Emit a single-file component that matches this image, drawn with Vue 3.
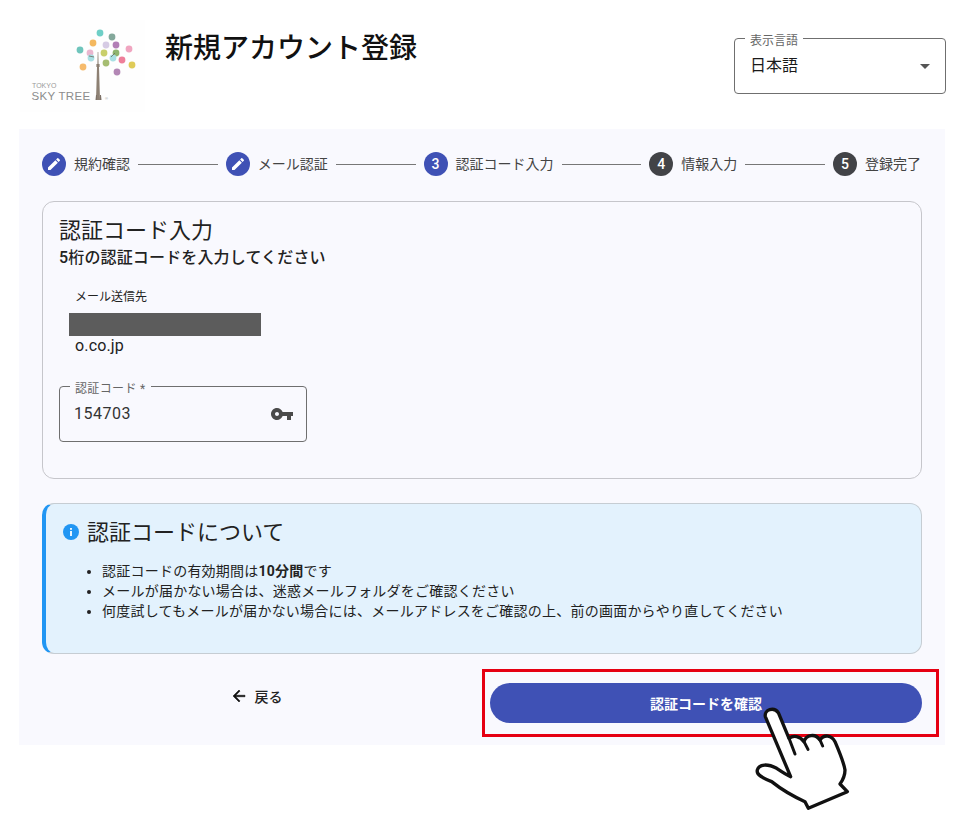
<script setup>
const steps = [
  { label: '規約確認', state: 'done' },
  { label: 'メール認証', state: 'done' },
  { label: '認証コード入力', state: 'active', n: 3 },
  { label: '情報入力', state: 'todo', n: 4 },
  { label: '登録完了', state: 'todo', n: 5 },
]
const dots = [
  [100, 33, '#6fcfc7'], [112, 37, '#84a89b'], [93, 43, '#f4b85f'], [106, 45, '#d6cbe4'], [116, 45, '#b27fb6'],
  [80, 50, '#6fc5bc'], [90, 53, '#e9b6cf'], [104, 53, '#c9cf6b'], [116, 53, '#8fb56f'], [129, 49, '#f0a5c0'],
  [91, 58, '#a9e0e4'], [113, 58, '#a9e0e4'], [122, 60, '#ee7f9a'], [106, 63, '#a6bd72'], [132, 65, '#dfcb58'],
  [83, 67, '#f6bb6c'], [117, 72, '#b387b5'],
]
</script>

<template>
  <div class="page">
    <header class="head">
      <svg class="logo" width="125" height="92" viewBox="20 20 125 92">
        <rect x="20" y="20" width="125" height="92" fill="#fefefe" />
        <circle v-for="(d, i) in dots" :key="i" :cx="d[0]" :cy="d[1]" r="3.4" :fill="d[2]" />
        <path d="M89 56 L94 57 M111 57 L115 53" stroke="#6b6b5f" stroke-width=".8" fill="none" />
        <path d="M97.7 52 L98.3 52 L98.6 64 L99.6 64 L99.6 67 L99 67 L100 100 L96 100 L97 67 L96.4 67 L96.4 64 L97.4 64 Z" fill="#8d8073" />
        <path d="M95.5 100 L96 95 L97 95 L97 100 Z M100 100 L100 95 L101 95 L101.5 100 Z" fill="#7d7167" />
        <text x="32" y="88" class="tokyo">TOKYO</text>
        <text x="31.5" y="100" class="sky">SKY TREE</text>
        <text x="105" y="100" class="reg">®</text>
      </svg>
      <h1 class="title">新規アカウント登録</h1>
      <div class="lang">
        <span class="float">表示言語</span>
        <span class="lang-value">日本語</span>
        <span class="caret"></span>
      </div>
    </header>

    <main class="panel">
      <div class="stepper">
        <template v-for="(s, i) in steps" :key="s.label">
          <div class="step">
            <span class="badge" :class="s.state">
              <svg v-if="s.state === 'done'" width="16" height="16" viewBox="0 0 24 24">
                <path fill="#fff" d="M3 17.25V21h3.75L17.81 9.94l-3.75-3.75L3 17.25zM20.71 7.04a1 1 0 0 0 0-1.41l-2.34-2.34a1 1 0 0 0-1.41 0l-1.83 1.83 3.75 3.75 1.83-1.83z" />
              </svg>
              <template v-else>{{ s.n }}</template>
            </span>
            <span class="step-label">{{ s.label }}</span>
          </div>
          <span v-if="i < steps.length - 1" class="line"></span>
        </template>
      </div>

      <section class="card">
        <h2 class="card-title">認証コード入力</h2>
        <p class="card-sub">5桁の認証コードを入力してください</p>
        <p class="mail-label">メール送信先</p>
        <div class="redact"></div>
        <p class="mail">o.co.jp</p>
        <div class="code">
          <span class="float">認証コード *</span>
          <span class="code-value">154703</span>
          <svg class="key" width="24" height="24" viewBox="0 0 24 24">
            <path fill="#4a4a4a" d="M12.65 10C11.83 7.67 9.61 6 7 6c-3.31 0-6 2.69-6 6s2.69 6 6 6c2.61 0 4.83-1.67 5.65-4H17v4h4v-4h2v-4H12.65zM7 14c-1.1 0-2-.9-2-2s.9-2 2-2 2 .9 2 2-.9 2-2 2z" />
          </svg>
        </div>
      </section>

      <section class="info">
        <div class="info-head">
          <svg class="info-icon" width="18" height="18" viewBox="0 0 18 18">
            <circle cx="9" cy="9" r="8" fill="#2196f3" />
            <rect x="8.1" y="8" width="1.8" height="5" fill="#fff" />
            <rect x="8.1" y="5" width="1.8" height="1.8" fill="#fff" />
          </svg>
          <h3 class="info-title">認証コードについて</h3>
        </div>
        <ul class="info-list">
          <li>認証コードの有効期間は<b>10分間</b>です</li>
          <li>メールが届かない場合は、迷惑メールフォルダをご確認ください</li>
          <li>何度試してもメールが届かない場合には、メールアドレスをご確認の上、前の画面からやり直してください</li>
        </ul>
      </section>

      <div class="actions">
        <button class="back">
          <svg width="18" height="18" viewBox="0 0 24 24">
            <path fill="#111" stroke="#111" stroke-width=".7" d="M20 11H7.83l5.59-5.59L12 4l-8 8 8 8 1.41-1.41L7.83 13H20v-2z" />
          </svg>
          <span>戻る</span>
        </button>
        <button class="primary">認証コードを確認</button>
      </div>
    </main>

    <div class="highlight"></div>
    <svg class="hand" width="310" height="160" viewBox="0 0 930 480">
      <path
        d="M376 170 C372 148 402 140 415 158 L447 235 C460 225 480 228 492 245 C498 225 525 218 540 240 C552 222 575 225 585 245 C600 280 612 310 615 330 C615 350 605 365 600 372 L622 395 L505 445 L495 425 C450 405 420 385 395 365 C370 355 348 345 352 330 C358 310 385 312 410 325 C425 335 440 345 452 350 Z"
        fill="#fff" stroke="#111" stroke-width="10" stroke-linejoin="round"
      />
      <path d="M447 235 L465 282 M492 245 L504 268 M540 240 L548 258" fill="none" stroke="#111" stroke-width="9" stroke-linecap="round" />
    </svg>
  </div>
</template>

<style>
body { background: #fff; }
</style>

<style scoped>
.page {
  position: relative;
  width: 964px;
  height: 824px;
  overflow: hidden;
  background: #fff;
  color: #1a1a1a;
  font-family: Roboto, "Noto Sans CJK JP", sans-serif;
}
.head {
  display: flex;
  align-items: flex-start;
  height: 129px;
  box-sizing: border-box;
  padding: 20px 18px 0 20px;
}
.logo { flex: none; }
.tokyo { font-family: "Liberation Sans", sans-serif; font-size: 7px; fill: #9a9a9a; }
.sky { font-family: "Liberation Sans", sans-serif; font-size: 11.5px; fill: #8c8c8c; letter-spacing: .3px; }
.reg { font-family: "Liberation Sans", sans-serif; font-size: 4px; fill: #999; }
.title {
  margin: 10px 0 0 20px;
  flex: 1;
  font-size: 28px;
  line-height: 38px;
  font-weight: 500;
  color: #111;
}
.lang {
  position: relative;
  width: 212px;
  height: 56px;
  margin-top: 18px;
  box-sizing: border-box;
  border: 1px solid #6f6f6f;
  border-radius: 4px;
  padding: 16px 15px;
}
.float {
  position: absolute;
  top: -3px;
  left: 10px;
  padding: 0 5px;
  background: #fff;
  font-size: 12px;
  line-height: 10px;
  color: #666;
}
.lang-value { font-size: 16px; line-height: 21px; display: block; }
.caret {
  position: absolute;
  right: 15px;
  top: 25px;
  width: 0;
  height: 0;
  border-left: 5px solid transparent;
  border-right: 5px solid transparent;
  border-top: 5px solid #555;
}
.panel {
  width: 926px;
  margin-left: 19px;
  height: 616px;
  box-sizing: border-box;
  padding: 23px 23px 22px;
  background: #f9f9fe;
}
.stepper { display: flex; align-items: center; height: 24px; padding-right: 1px; }
.step { display: flex; align-items: center; gap: 8px; }
.badge {
  display: flex;
  align-items: center;
  justify-content: center;
  width: 24px;
  height: 24px;
  border-radius: 50%;
  font-size: 14px;
  font-weight: 500;
  color: #fff;
}
.done, .active { background: #3f51b5; }
.todo { background: #424347; }
.step-label { font-size: 14px; line-height: 20px; color: #444; }
.line { flex: 1; height: 1px; margin: 0 8px; background: #777; }
.card {
  height: 278px;
  margin-top: 25px;
  box-sizing: border-box;
  padding: 15px 16px;
  border: 1px solid #c6c6cb;
  border-radius: 12px;
}
.card-title { margin: 0; font-size: 22px; line-height: 28px; font-weight: 400; color: #222; }
.card-sub { margin: 1px 0 0; font-size: 16px; line-height: 24px; font-weight: 500; color: #222; letter-spacing: .15px; }
.mail-label { margin: 19px 0 0 16px; font-size: 12px; line-height: 16px; color: #222; }
.redact { width: 192px; height: 23px; margin: 8px 0 0 10px; background: #5c5c5c; }
.mail { margin: 0 0 0 16px; font-size: 16px; line-height: 20px; padding-top: 0; color: #222; letter-spacing: .15px; }
.code {
  position: relative;
  display: flex;
  align-items: center;
  justify-content: space-between;
  width: 248px;
  height: 56px;
  margin-top: 30px;
  box-sizing: border-box;
  border: 1px solid #6f6f6f;
  border-radius: 4px;
  padding: 0 12px 1px 14px;
}
.code .float { background: #f9f9fe; letter-spacing: .35px; }
.code-value { font-size: 16px; letter-spacing: .5px; color: #333; }
.info {
  height: 151px;
  margin-top: 24px;
  box-sizing: border-box;
  padding: 13px 16px;
  background: #e3f2fd;
  border: 1px solid #c6cdd3;
  border-left: 4px solid #2196f3;
  border-radius: 12px;
}
.info-head { display: flex; align-items: center; gap: 7px; }
.info-icon { margin-top: -3px; }
.info-title { margin: 0; font-size: 22px; line-height: 32px; font-weight: 400; color: #222; }
.info-list { margin: 12px 0 0; padding-left: 40px; font-size: 14px; line-height: 20px; color: #222; letter-spacing: .23px; }
.info-list b { font-weight: 700; }
.actions {
  display: grid;
  grid-template-columns: 428px 432px;
  gap: 20px;
  margin-top: 29px;
}
.back, .primary {
  display: flex;
  align-items: center;
  justify-content: center;
  height: 40px;
  border: 0;
  font-family: inherit;
  font-size: 14px;
  font-weight: 500;
}
.back { gap: 7px; background: transparent; color: #222; margin-top: -7px; }
.primary { background: #3f51b5; color: #fff; border-radius: 20px; font-weight: 700; padding-bottom: 2px; }
.highlight {
  position: absolute;
  left: 482px;
  top: 669px;
  width: 457px;
  height: 68px;
  box-sizing: border-box;
  border: 3px solid #e60012;
}
.hand { position: absolute; left: 640px; top: 660px; }
</style>
